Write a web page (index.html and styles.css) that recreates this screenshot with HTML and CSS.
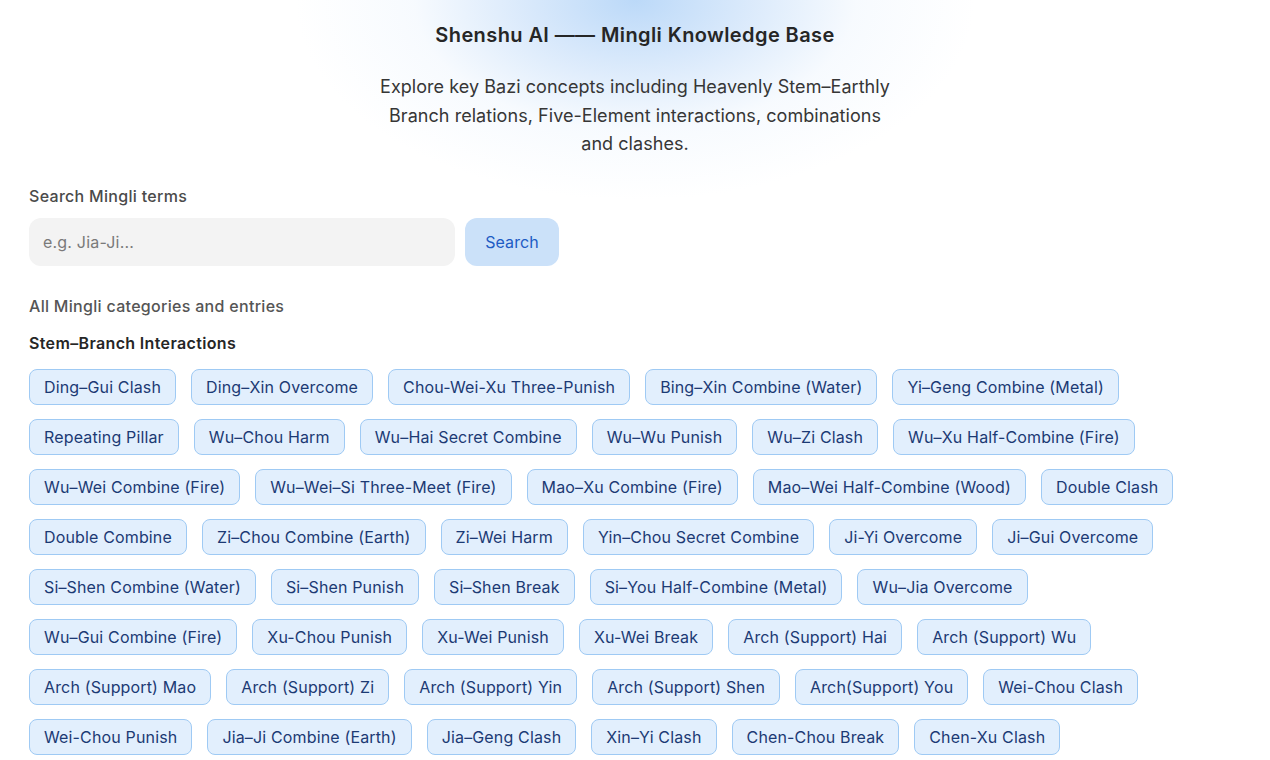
FILE: index.html
```html
<!DOCTYPE html>
<html lang="en">
<head>
<meta charset="utf-8">
<title>Shenshu AI — Mingli Knowledge Base</title>
<link rel="stylesheet" href="styles.css">
</head>
<body>
<div class="page">
  <header class="hero">
    <h1 class="title">Shenshu AI —— Mingli Knowledge Base</h1>
    <p class="subtitle">Explore key Bazi concepts including Heavenly Stem–Earthly Branch relations, Five-Element interactions, combinations and clashes.</p>
  </header>
  <main class="main">
    <label class="search-label" for="q">Search Mingli terms</label>
    <div class="search-row">
      <input id="q" class="search-input" type="text" placeholder="e.g. Jia-Ji...">
      <button class="search-btn" type="button">Search</button>
    </div>
    <div class="all-label">All Mingli categories and entries</div>
    <h2 class="cat-title">Stem–Branch Interactions</h2>
    <div class="tags">
      <span class="tag">Ding–Gui Clash</span>
      <span class="tag">Ding–Xin Overcome</span>
      <span class="tag">Chou-Wei-Xu Three-Punish</span>
      <span class="tag">Bing–Xin Combine (Water)</span>
      <span class="tag">Yi–Geng Combine (Metal)</span>
      <span class="tag">Repeating Pillar</span>
      <span class="tag">Wu–Chou Harm</span>
      <span class="tag">Wu–Hai Secret Combine</span>
      <span class="tag">Wu–Wu Punish</span>
      <span class="tag">Wu–Zi Clash</span>
      <span class="tag">Wu–Xu Half-Combine (Fire)</span>
      <span class="tag">Wu–Wei Combine (Fire)</span>
      <span class="tag">Wu–Wei–Si Three-Meet (Fire)</span>
      <span class="tag">Mao–Xu Combine (Fire)</span>
      <span class="tag">Mao–Wei Half-Combine (Wood)</span>
      <span class="tag">Double Clash</span>
      <span class="tag">Double Combine</span>
      <span class="tag">Zi–Chou Combine (Earth)</span>
      <span class="tag">Zi–Wei Harm</span>
      <span class="tag">Yin–Chou Secret Combine</span>
      <span class="tag">Ji-Yi Overcome</span>
      <span class="tag">Ji–Gui Overcome</span>
      <span class="tag">Si–Shen Combine (Water)</span>
      <span class="tag">Si–Shen Punish</span>
      <span class="tag">Si–Shen Break</span>
      <span class="tag">Si–You Half-Combine (Metal)</span>
      <span class="tag">Wu–Jia Overcome</span>
      <span class="tag">Wu–Gui Combine (Fire)</span>
      <span class="tag">Xu-Chou Punish</span>
      <span class="tag">Xu-Wei Punish</span>
      <span class="tag">Xu-Wei Break</span>
      <span class="tag">Arch (Support) Hai</span>
      <span class="tag">Arch (Support) Wu</span>
      <span class="tag">Arch (Support) Mao</span>
      <span class="tag">Arch (Support) Zi</span>
      <span class="tag">Arch (Support) Yin</span>
      <span class="tag">Arch (Support) Shen</span>
      <span class="tag">Arch(Support) You</span>
      <span class="tag">Wei-Chou Clash</span>
      <span class="tag">Wei-Chou Punish</span>
      <span class="tag">Jia–Ji Combine (Earth)</span>
      <span class="tag">Jia–Geng Clash</span>
      <span class="tag">Xin–Yi Clash</span>
      <span class="tag">Chen-Chou Break</span>
      <span class="tag">Chen-Xu Clash</span>
    </div>
  </main>
</div>
</body>
</html>
```
FILE: styles.css
```css
* { box-sizing: border-box; }
html, body {
  margin: 0;
  padding: 0;
  background: #ffffff;
}
body {
  font-family: Inter, "Noto Sans", "Liberation Sans", sans-serif;
  color: #222;
}
.page {
  min-height: 760px;
  background:
    radial-gradient(ellipse 340px 200px at 635px 0px, rgba(184, 215, 248, 0.95) 0%, rgba(205, 226, 250, 0.7) 35%, rgba(232, 242, 253, 0.35) 65%, rgba(255, 255, 255, 0) 100%);
}
.hero {
  padding-top: 22px;
  text-align: center;
}
.title {
  margin: 0;
  font-size: 20px;
  line-height: 27px;
  font-weight: 600;
  color: #262626;
  letter-spacing: 0.4px;
}
.subtitle {
  margin: 24px auto 0;
  max-width: 516px;
  font-size: 18px;
  line-height: 28.5px;
  color: #363636;
  font-weight: 400;
  letter-spacing: 0.05px;
}
.main {
  padding: 0 29px;
}
.search-label {
  display: block;
  margin-top: 27px;
  font-size: 16px;
  line-height: 20px;
  font-weight: 500;
  color: #4a4a4a;
  letter-spacing: 0.3px;
}
.search-row {
  display: flex;
  gap: 10px;
  margin-top: 12px;
}
.search-input {
  width: 426px;
  height: 48px;
  border: none;
  border-radius: 12px;
  background: #f3f3f3;
  padding: 0 14px;
  font-family: inherit;
  font-size: 16px;
  color: #333;
  outline: none;
  letter-spacing: 0.2px;
}
.search-input::placeholder { color: #7a7a7a; }
.search-btn {
  width: 94px;
  height: 48px;
  border: none;
  border-radius: 12px;
  background: #cbe1f9;
  color: #1d5bc4;
  font-family: inherit;
  font-size: 16px;
  letter-spacing: 0.1px;
  cursor: pointer;
}
.all-label {
  margin-top: 30px;
  font-size: 16px;
  line-height: 20px;
  font-weight: 500;
  color: #555;
  letter-spacing: 0.3px;
}
.cat-title {
  margin: 17px 0 0;
  font-size: 16px;
  line-height: 20px;
  font-weight: 600;
  color: #262626;
  letter-spacing: 0.35px;
}
.tags {
  display: flex;
  flex-wrap: wrap;
  gap: 14px 15px;
  margin-top: 16px;
  max-width: 1180px;
}
.tag {
  display: inline-block;
  height: 36px;
  padding: 7px 14px;
  border: 1px solid #9fcaf4;
  border-radius: 8px;
  background: #e2effd;
  color: #1c3a74;
  font-size: 16px;
  line-height: 20px;
  letter-spacing: 0.15px;
  white-space: nowrap;
}
```
